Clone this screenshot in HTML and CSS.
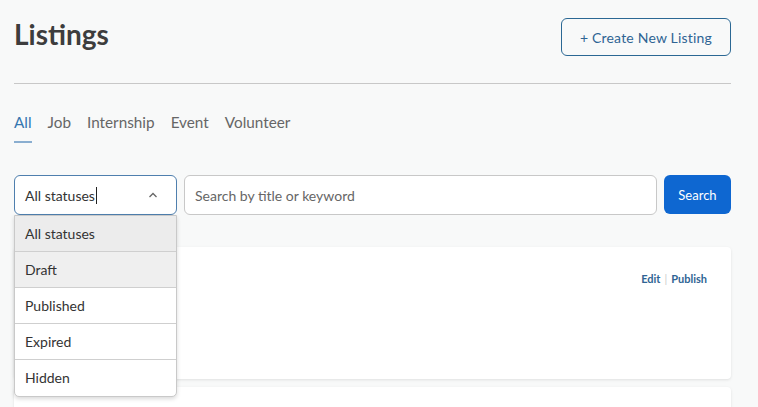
FILE: index.html
```html
<!DOCTYPE html>
<html lang="en">
<head>
  <meta charset="UTF-8" />
  <meta name="viewport" content="width=device-width, initial-scale=1.0" />
  <title>Listings</title>
  <link rel="stylesheet" href="styles.css">
</head>
<body>
  <div class="page">
    <header class="page-head">
      <h1>Listings</h1>
      <button class="btn-outline">+ Create New Listing</button>
    </header>

    <nav class="tabs">
      <a class="tab active">All</a>
      <a class="tab">Job</a>
      <a class="tab">Internship</a>
      <a class="tab">Event</a>
      <a class="tab">Volunteer</a>
    </nav>

    <div class="filters">
      <div class="status-select">
        <div class="select-box">
          <span class="select-value">All statuses<span class="caret-line"></span></span>
          <svg class="chevron" width="10" height="6" viewBox="0 0 10 6"><path d="M1.5 5 L5 1.5 L8.5 5" fill="none" stroke="#666" stroke-width="1.3"/></svg>
        </div>
        <ul class="options">
          <li class="selected">All statuses</li>
          <li class="hover">Draft</li>
          <li>Published</li>
          <li>Expired</li>
          <li>Hidden</li>
        </ul>
      </div>
      <input class="search-input" type="text" placeholder="Search by title or keyword" />
      <button class="btn-search">Search</button>
    </div>

    <div class="card">
      <div class="card-actions">
        <a>Edit</a><span class="sep">|</span><a>Publish</a>
      </div>
    </div>
    <div class="card"></div>
  </div>
</body>
</html>
```

FILE: styles.css
```css
* {
  box-sizing: border-box;
}
body {
  margin: 0;
  background: #f8f9f9;
  font-family: "Lato", "Open Sans", sans-serif;
  color: #444;
}
.page {
  width: 717px;
  margin-left: 14px;
  padding-top: 18px;
}
.page-head {
  display: flex;
  justify-content: space-between;
  align-items: flex-start;
  padding-bottom: 27px;
  border-bottom: 1px solid #c8c8c8;
}
h1 {
  margin: -1px 0 0;
  font-size: 28px;
  font-weight: 700;
  color: #3d3d3d;
  line-height: 34px;
}
.btn-outline {
  height: 38px;
  width: 170px;
  background: transparent;
  border: 1px solid #2b6894;
  border-radius: 6px;
  color: #2f6494;
  font-family: inherit;
  font-size: 14px;
  letter-spacing: 0.2px;
}
.tabs {
  display: flex;
  gap: 16px;
  margin-top: 28px;
}
.tab {
  font-size: 15.3px;
  color: #666;
  padding-bottom: 9px;
  line-height: 20px;
}
.tab.active {
  color: #3577b0;
  border-bottom: 2px solid #8aaed0;
}
.filters {
  display: flex;
  gap: 7px;
  margin-top: 32px;
  height: 40px;
}
.status-select {
  position: relative;
  width: 163px;
}
.select-box {
  height: 40px;
  border: 1px solid #4f7fae;
  border-radius: 6px;
  background: #fff;
  display: flex;
  align-items: center;
  justify-content: space-between;
  padding: 0 18px 0 10px;
  font-size: 14px;
  color: #333;
}
.select-value {
  display: flex;
  align-items: center;
}
.caret-line {
  display: inline-block;
  width: 1px;
  height: 17px;
  background: #222;
  margin-left: 1px;
}
.options {
  position: absolute;
  top: 40px;
  left: 0;
  width: 163px;
  margin: 0;
  padding: 0;
  list-style: none;
  background: #fff;
  border: 1px solid #c9c9c9;
  border-radius: 0 0 5px 5px;
  box-shadow: 0 2px 4px rgba(0, 0, 0, 0.15);
  z-index: 2;
}
.options li {
  height: 36px;
  line-height: 35px;
  padding-left: 10px;
  font-size: 14px;
  color: #333;
  border-bottom: 1px solid #cfcfcf;
}
.options li:last-child {
  border-bottom: none;
}
.options li.selected {
  background: #ececec;
}
.options li.hover {
  background: #efefef;
}
.search-input {
  flex: 1;
  height: 40px;
  border: 1px solid #c8c8c8;
  border-radius: 6px;
  padding: 0 10px;
  font-family: inherit;
  font-size: 14px;
  background: #fff;
}
.search-input::placeholder {
  color: #666;
}
.btn-search {
  width: 67px;
  height: 39px;
  background: #0e67d1;
  color: #fff;
  border: none;
  border-radius: 6px;
  font-family: inherit;
  font-size: 13px;
}
.card {
  background: #fff;
  border-radius: 4px;
  box-shadow: 0 1px 3px rgba(0, 0, 0, 0.1);
  height: 132px;
  margin-top: 32px;
  padding: 25px 24px;
  display: flex;
  justify-content: flex-end;
}
.card + .card {
  margin-top: 8px;
}
.card-actions {
  font-size: 11px;
  font-weight: 700;
  color: #2f6494;
}
.sep {
  color: #ccc;
  font-weight: 400;
  margin: 0 4px;
}
```
